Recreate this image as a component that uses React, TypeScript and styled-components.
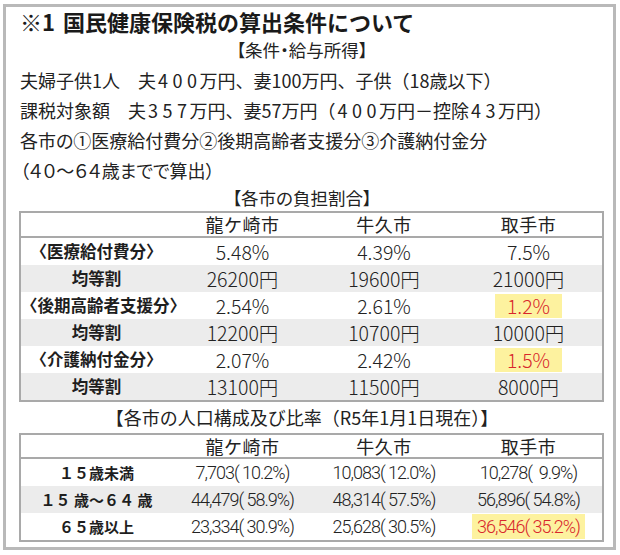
import React from "react";
import styled, { createGlobalStyle } from "styled-components";

const Global = createGlobalStyle`
  html, body { margin: 0; padding: 0; background: #fff; }
  body { font-family: "Noto Sans CJK JP", "Noto Sans", sans-serif; color: #222; }
`;

const Frame = styled.div`
  box-sizing: border-box;
  margin: 4px 0 0 3px;
  width: 613px;
  height: 546px;
  border: 3px solid #b9b9b9;
  padding: 0 10px 0 13px;
  display: flex;
  flex-direction: column;
`;

const Title = styled.h1`
  margin: 0;
  height: 28px;
  line-height: 28px;
  font-size: 22px;
  font-weight: 700;
  padding-left: 1px;
  color: #1a1a1a;
  white-space: nowrap;
`;

const TitleMark = styled.span`
  margin-right: 8px;
`;

const SubHead = styled.div<{ $h: number; $tight?: boolean; $size?: number }>`
  flex: none;
  height: ${(p) => p.$h}px;
  line-height: ${(p) => p.$h}px;
  text-align: center;
  font-size: ${(p) => p.$size ?? 17.5}px;
  font-feature-settings: ${(p) => (p.$tight ? `"palt"` : "normal")};
  padding-right: 18px;
  white-space: nowrap;
`;

const Line = styled.div<{ $tight?: boolean }>`
  flex: none;
  height: 30px;
  line-height: 30px;
  font-size: 18px;
  padding-left: 1px;
  white-space: nowrap;
  font-feature-settings: ${(p) => (p.$tight ? `"palt"` : "normal")};
`;

const Num = styled.span`
  letter-spacing: 4.5px;
  margin-left: 2px;
  margin-right: -2px;
`;

const Table = styled.table`
  flex: none;
  border-collapse: collapse;
  width: 583px;
  table-layout: fixed;
  border: 2px solid #a9a9a9;
`;

const HeadRow = styled.tr`
  border-bottom: 2px solid #a9a9a9;
`;

const HeadCell = styled.th<{ $h: number }>`
  height: ${(p) => p.$h}px;
  line-height: ${(p) => p.$h}px;
  padding: 0;
  font-weight: 400;
  font-size: 18px;
  letter-spacing: 0.5px;
  text-align: center;
`;

const Row = styled.tr<{ $shade?: boolean }>`
  background: ${(p) => (p.$shade ? "#ececec" : "#fff")};
`;

const LabelCell = styled.td<{ $small?: boolean; $h: number }>`
  padding: 0;
  height: ${(p) => p.$h}px;
  line-height: ${(p) => p.$h}px;
  text-align: center;
  font-weight: 700;
  font-size: ${(p) => (p.$small ? 15 : 16.5)}px;
  color: #1e1e1e;
  white-space: nowrap;
`;

const ValueCell = styled.td<{ $pop?: boolean; $h: number }>`
  padding: 0;
  height: ${(p) => p.$h}px;
  line-height: ${(p) => p.$h}px;
  text-align: center;
  vertical-align: top;
  font-family: ${(p) => (p.$pop ? `"Roboto", "Noto Sans CJK JP", sans-serif` : `"Noto Sans CJK JP", sans-serif`)};
  font-size: ${(p) => (p.$pop ? 18 : 19.5)}px;
  letter-spacing: ${(p) => (p.$pop ? -1 : 0)}px;
  font-weight: 300;
  color: #222;
  white-space: pre;
`;

const Mark = styled.span<{ $pad: number; $h: number; $top: number }>`
  display: inline-block;
  vertical-align: top;
  margin-top: ${(p) => p.$top}px;
  background: #fdf29f;
  color: #d8262c;
  padding: 0 ${(p) => p.$pad}px;
  height: ${(p) => p.$h}px;
  line-height: ${(p) => p.$h}px;
`;

type Cell = { v: string; hi?: boolean };

const burden: { label: string; shade: boolean; cells: Cell[] }[] = [
  { label: "〈医療給付費分〉", shade: false, cells: [{ v: "5.48%" }, { v: "4.39%" }, { v: "7.5%" }] },
  { label: "均等割", shade: true, cells: [{ v: "26200円" }, { v: "19600円" }, { v: "21000円" }] },
  { label: "〈後期高齢者支援分〉", shade: false, cells: [{ v: "2.54%" }, { v: "2.61%" }, { v: "1.2%", hi: true }] },
  { label: "均等割", shade: true, cells: [{ v: "12200円" }, { v: "10700円" }, { v: "10000円" }] },
  { label: "〈介護納付金分〉", shade: false, cells: [{ v: "2.07%" }, { v: "2.42%" }, { v: "1.5%", hi: true }] },
  { label: "均等割", shade: true, cells: [{ v: "13100円" }, { v: "11500円" }, { v: "8000円" }] },
];

const pop: { label: string; shade: boolean; cells: Cell[] }[] = [
  { label: "１５歳未満", shade: false, cells: [{ v: "7,703( 10.2%)" }, { v: "10,083( 12.0%)" }, { v: "10,278(  9.9%)" }] },
  { label: "１５ 歳～６４ 歳", shade: true, cells: [{ v: "44,479( 58.9%)" }, { v: "48,314( 57.5%)" }, { v: "56,896( 54.8%)" }] },
  { label: "６５歳以上", shade: false, cells: [{ v: "23,334( 30.9%)" }, { v: "25,628( 30.5%)" }, { v: "36,546( 35.2%)", hi: true }] },
];

const Cols = () => (
  <colgroup>
    <col style={{ width: 152 }} />
    <col style={{ width: 141 }} />
    <col style={{ width: 142 }} />
    <col style={{ width: 148 }} />
  </colgroup>
);

const cities = ["龍ケ崎市", "牛久市", "取手市"];

export default function App() {
  return (
    <>
      <Global />
      <Frame>
        <Title>
          <TitleMark>※1</TitleMark>国民健康保険税の算出条件について
        </Title>
        <SubHead $h={30} $tight>【条件・給与所得】</SubHead>
        <Line>
          夫婦子供1人　夫<Num>400</Num>万円、妻100万円、子供（18歳以下）
        </Line>
        <Line>
          課税対象額　夫<Num>357</Num>万円、妻57万円（<Num>400</Num>万円－控除<Num>43</Num>万円）
        </Line>
        <Line $tight>各市の①医療給付費分②後期高齢者支援分③介護納付金分</Line>
        <Line $tight>（４０～６４歳までで算出）</Line>
        <SubHead $h={26} $tight>【各市の負担割合】</SubHead>
        <Table>
          <Cols />
          <thead>
            <HeadRow>
              <HeadCell $h={23} />
              {cities.map((c) => (
                <HeadCell key={c} $h={23}>{c}</HeadCell>
              ))}
            </HeadRow>
          </thead>
          <tbody>
            {burden.map((r, i) => (
              <Row key={i} $shade={r.shade}>
                <LabelCell $h={27}>{r.label}</LabelCell>
                {r.cells.map((c, j) => (
                  <ValueCell key={j} $h={27}>
                    {c.hi ? <Mark $pad={12} $h={24} $top={1.5}>{c.v}</Mark> : c.v}
                  </ValueCell>
                ))}
              </Row>
            ))}
          </tbody>
        </Table>
        <SubHead $h={31} $size={18}>【各市の人口構成及び比率（R5年1月1日現在）】</SubHead>
        <Table>
          <Cols />
          <thead>
            <HeadRow>
              <HeadCell $h={22} />
              {cities.map((c) => (
                <HeadCell key={c} $h={22}>{c}</HeadCell>
              ))}
            </HeadRow>
          </thead>
          <tbody>
            {pop.map((r, i) => (
              <Row key={i} $shade={r.shade}>
                <LabelCell $small $h={27}>{r.label}</LabelCell>
                {r.cells.map((c, j) => (
                  <ValueCell key={j} $pop $h={27}>
                    {c.hi ? <Mark $pad={5} $h={25} $top={1}>{c.v}</Mark> : c.v}
                  </ValueCell>
                ))}
              </Row>
            ))}
          </tbody>
        </Table>
      </Frame>
    </>
  );
}
